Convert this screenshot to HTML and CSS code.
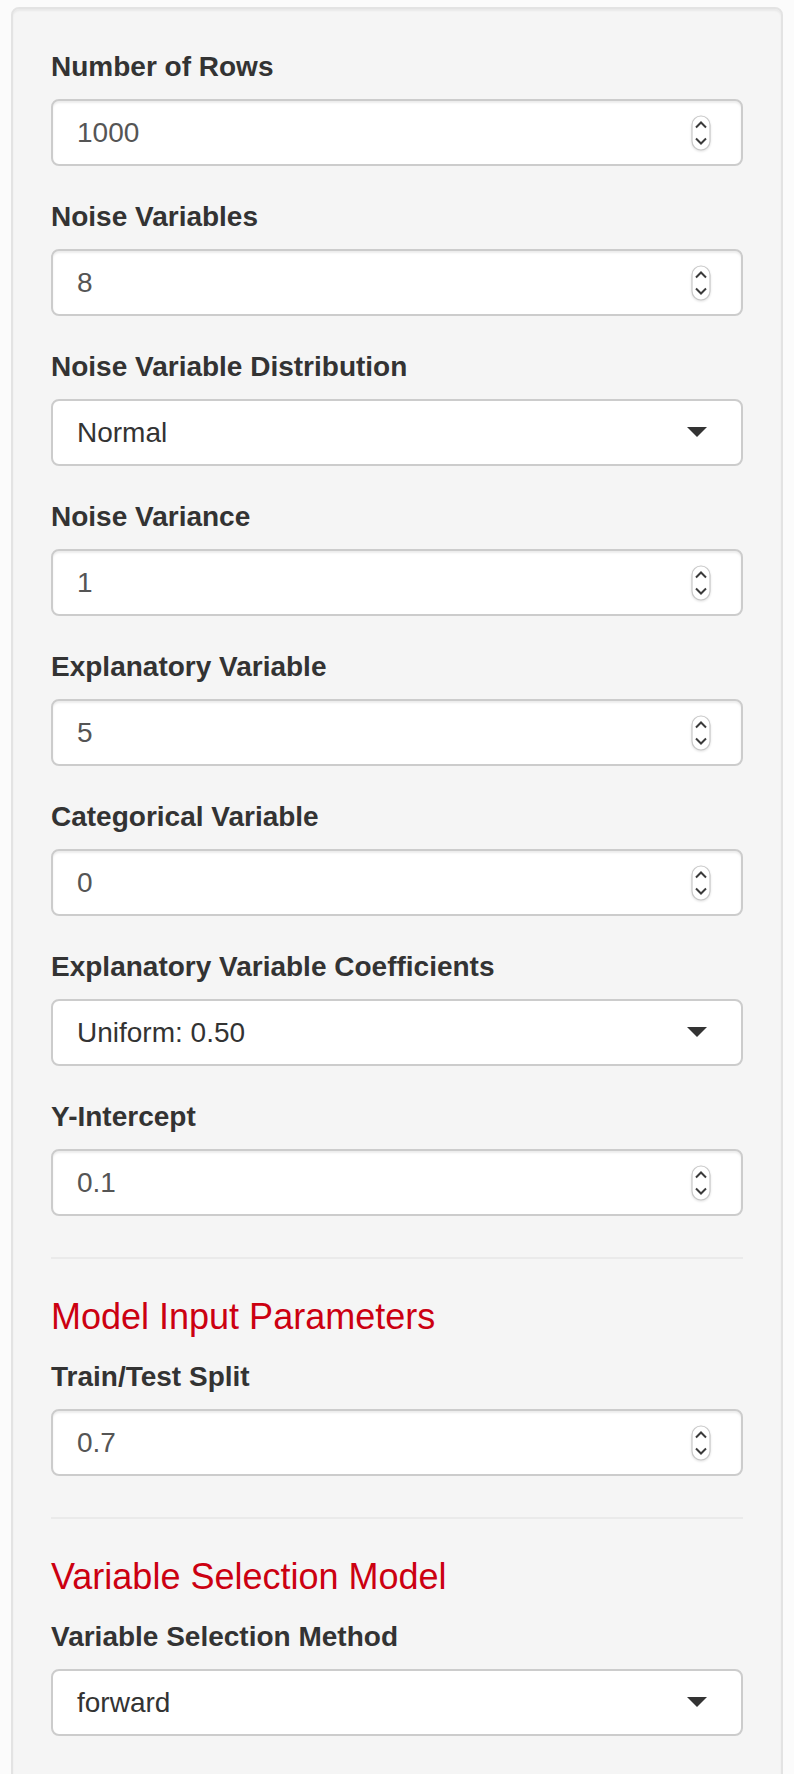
FILE: index.html
```html
<!DOCTYPE html>
<html>
<head>
<meta charset="utf-8">
<link rel="stylesheet" href="styles.css">
</head>
<body>
<div class="well">
  <div class="form-group">
    <div class="label">Number of Rows</div>
    <div class="control number"><span class="value">1000</span><svg class="spin" width="20" height="36" viewBox="0 0 20 36"><rect x="1" y="1" width="18" height="34" rx="9" fill="#fff" stroke="#c9c9c9" stroke-width="1.2"/><polyline points="5,12.5 10,7.5 15,12.5" fill="none" stroke="#3a3a3a" stroke-width="2"/><polyline points="5,23.5 10,28.5 15,23.5" fill="none" stroke="#3a3a3a" stroke-width="2"/></svg></div>
  </div>
  <div class="form-group">
    <div class="label">Noise Variables</div>
    <div class="control number"><span class="value">8</span><svg class="spin" width="20" height="36" viewBox="0 0 20 36"><rect x="1" y="1" width="18" height="34" rx="9" fill="#fff" stroke="#c9c9c9" stroke-width="1.2"/><polyline points="5,12.5 10,7.5 15,12.5" fill="none" stroke="#3a3a3a" stroke-width="2"/><polyline points="5,23.5 10,28.5 15,23.5" fill="none" stroke="#3a3a3a" stroke-width="2"/></svg></div>
  </div>
  <div class="form-group">
    <div class="label">Noise Variable Distribution</div>
    <div class="control select"><span class="value">Normal</span><span class="caret"></span></div>
  </div>
  <div class="form-group">
    <div class="label">Noise Variance</div>
    <div class="control number"><span class="value">1</span><svg class="spin" width="20" height="36" viewBox="0 0 20 36"><rect x="1" y="1" width="18" height="34" rx="9" fill="#fff" stroke="#c9c9c9" stroke-width="1.2"/><polyline points="5,12.5 10,7.5 15,12.5" fill="none" stroke="#3a3a3a" stroke-width="2"/><polyline points="5,23.5 10,28.5 15,23.5" fill="none" stroke="#3a3a3a" stroke-width="2"/></svg></div>
  </div>
  <div class="form-group">
    <div class="label">Explanatory Variable</div>
    <div class="control number"><span class="value">5</span><svg class="spin" width="20" height="36" viewBox="0 0 20 36"><rect x="1" y="1" width="18" height="34" rx="9" fill="#fff" stroke="#c9c9c9" stroke-width="1.2"/><polyline points="5,12.5 10,7.5 15,12.5" fill="none" stroke="#3a3a3a" stroke-width="2"/><polyline points="5,23.5 10,28.5 15,23.5" fill="none" stroke="#3a3a3a" stroke-width="2"/></svg></div>
  </div>
  <div class="form-group">
    <div class="label">Categorical Variable</div>
    <div class="control number"><span class="value">0</span><svg class="spin" width="20" height="36" viewBox="0 0 20 36"><rect x="1" y="1" width="18" height="34" rx="9" fill="#fff" stroke="#c9c9c9" stroke-width="1.2"/><polyline points="5,12.5 10,7.5 15,12.5" fill="none" stroke="#3a3a3a" stroke-width="2"/><polyline points="5,23.5 10,28.5 15,23.5" fill="none" stroke="#3a3a3a" stroke-width="2"/></svg></div>
  </div>
  <div class="form-group">
    <div class="label">Explanatory Variable Coefficients</div>
    <div class="control select"><span class="value">Uniform: 0.50</span><span class="caret"></span></div>
  </div>
  <div class="form-group">
    <div class="label">Y-Intercept</div>
    <div class="control number"><span class="value">0.1</span><svg class="spin" width="20" height="36" viewBox="0 0 20 36"><rect x="1" y="1" width="18" height="34" rx="9" fill="#fff" stroke="#c9c9c9" stroke-width="1.2"/><polyline points="5,12.5 10,7.5 15,12.5" fill="none" stroke="#3a3a3a" stroke-width="2"/><polyline points="5,23.5 10,28.5 15,23.5" fill="none" stroke="#3a3a3a" stroke-width="2"/></svg></div>
  </div>
  <hr class="divider">
  <h4 class="section-title">Model Input Parameters</h4>
  <div class="form-group">
    <div class="label">Train/Test Split</div>
    <div class="control number"><span class="value">0.7</span><svg class="spin" width="20" height="36" viewBox="0 0 20 36"><rect x="1" y="1" width="18" height="34" rx="9" fill="#fff" stroke="#c9c9c9" stroke-width="1.2"/><polyline points="5,12.5 10,7.5 15,12.5" fill="none" stroke="#3a3a3a" stroke-width="2"/><polyline points="5,23.5 10,28.5 15,23.5" fill="none" stroke="#3a3a3a" stroke-width="2"/></svg></div>
  </div>
  <hr class="divider">
  <h4 class="section-title">Variable Selection Model</h4>
  <div class="form-group">
    <div class="label">Variable Selection Method</div>
    <div class="control select"><span class="value">forward</span><span class="caret"></span></div>
  </div>
</div>
</body>
</html>
```
FILE: styles.css
```css
html, body {
  margin: 0;
  background: #fbfbfb;
}
body {
  padding: 7px 11px 0 11px;
  font-family: "Liberation Sans", Arial, Helvetica, sans-serif;
  color: #333;
}
.well {
  background: #f5f5f5;
  border: 2px solid #e3e3e3;
  border-radius: 8px;
  box-shadow: inset 0 2px 2px rgba(0,0,0,0.05);
  padding: 38px 38px 60px 38px;
}
.form-group {
  margin-bottom: 31px;
}
.label {
  font-size: 28px;
  font-weight: bold;
  line-height: 40px;
  margin-bottom: 12px;
  color: #333;
}
.control {
  box-sizing: border-box;
  height: 67px;
  background: #fff;
  border: 2px solid #ccc;
  border-radius: 8px;
  padding: 0 24px;
  display: flex;
  align-items: center;
  justify-content: space-between;
  font-size: 28px;
  line-height: 1;
}
.number {
  box-shadow: inset 0 2px 2px rgba(0,0,0,0.075);
  color: #555;
  padding-right: 30px;
}
.select {
  color: #333;
  padding-right: 34px;
}
.spin {
  display: block;
  flex: none;
  filter: drop-shadow(0 1px 1px rgba(0,0,0,0.12));
}
.caret {
  width: 0;
  height: 0;
  border-style: solid;
  border-width: 10px 10px 0 10px;
  border-color: #333 transparent transparent transparent;
  margin-top: -2px;
}
.divider {
  border: 0;
  border-top: 2px solid #eaeaea;
  margin: 41px 0 38px 0;
}
.section-title {
  font-size: 36px;
  font-weight: normal;
  line-height: 40px;
  color: #cc0011;
  margin: 0 0 20px 0;
}
```
